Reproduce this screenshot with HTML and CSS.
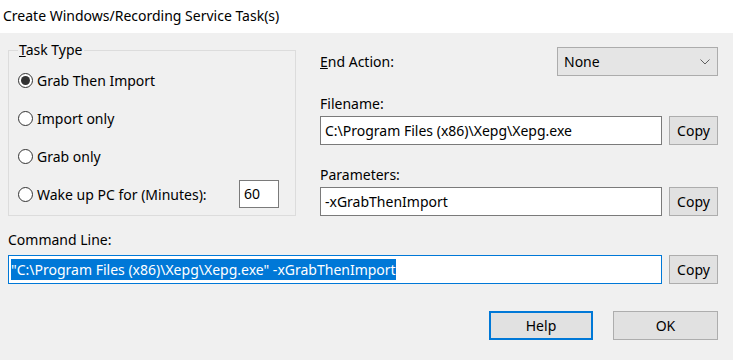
FILE: index.html
```html
<!DOCTYPE html>
<html>
<head>
<meta charset="utf-8">
<link rel="stylesheet" href="styles.css">
</head>
<body>
<div class="titlebar">Create Windows/Recording Service Task(s)</div>
<div class="dialog">
  <div class="top">
    <fieldset class="group">
      <legend class="legend"><u>T</u>ask Type</legend>
      <div class="radio-row"><span class="radio checked"></span><span>Grab Then Import</span></div>
      <div class="radio-row"><span class="radio"></span><span>Import only</span></div>
      <div class="radio-row"><span class="radio"></span><span>Grab only</span></div>
      <div class="radio-row"><span class="radio"></span><span>Wake up PC for (Minutes):</span><div class="field small">60</div></div>
    </fieldset>
    <div class="right">
      <div class="end-row">
        <span class="label"><u>E</u>nd Action:</span>
        <div class="dropdown">
          <span>None</span>
          <svg class="chev" width="10" height="6" viewBox="0 0 10 6"><path d="M0.5 0.5 L5 5 L9.5 0.5" fill="none" stroke="#606060" stroke-width="1"/></svg>
        </div>
      </div>
      <div class="label lbl-file">Filename:</div>
      <div class="field-row">
        <div class="field wide">C:\Program Files (x86)\Xepg\Xepg.exe</div>
        <div class="btn copy">Copy</div>
      </div>
      <div class="label lbl-param">Parameters:</div>
      <div class="field-row">
        <div class="field wide">-xGrabThenImport</div>
        <div class="btn copy">Copy</div>
      </div>
    </div>
  </div>
  <div class="label lbl-cmd">Command Line:</div>
  <div class="field-row">
    <div class="field wide focused"><span class="sel">"C:\Program Files (x86)\Xepg\Xepg.exe" -xGrabThenImport</span></div>
    <div class="btn copy">Copy</div>
  </div>
  <div class="buttons">
    <div class="btn action default">Help</div>
    <div class="btn action">OK</div>
  </div>
</div>
</body>
</html>
```
FILE: styles.css
```css
* { box-sizing: border-box; }
html, body { margin: 0; padding: 0; }
body {
  width: 733px;
  height: 360px;
  overflow: hidden;
  background: #f0f0f0;
  font-family: "Noto Sans", "Open Sans", sans-serif;
  font-size: 14px;
  color: #000;
}
.titlebar {
  height: 33px;
  background: #fff;
  padding: 6px 0 0 3px;
  font-size: 14px;
  line-height: 20px;
  color: #000;
}
.dialog {
  padding: 0 15px 0 8px;
}
.top {
  display: flex;
  align-items: flex-start;
  gap: 24px;
  margin-top: 7px;
}
.group {
  width: 288px;
  height: 176px;
  margin: 0;
  border: 1px solid #dcdcdc;
  padding: 6px 16px 6px 9px;
  display: flex;
  flex-direction: column;
  gap: 10px;
}
.legend {
  padding: 0 1px;
  line-height: 20px;
}
.radio-row {
  display: flex;
  align-items: center;
  height: 28px;
  gap: 4px;
}
.radio {
  width: 15px;
  height: 15px;
  border: 1px solid #333;
  border-radius: 50%;
  background: #fff;
  display: flex;
  align-items: center;
  justify-content: center;
  flex: none;
}
.radio.checked::after {
  content: "";
  width: 9px;
  height: 9px;
  border-radius: 50%;
  background: #333;
}
.field {
  background: #fff;
  border: 1px solid #7a7a7a;
  height: 29px;
  line-height: 27px;
  padding: 0 4px;
  white-space: nowrap;
  overflow: hidden;
}
.field.small {
  width: 40px;
  height: 28px;
  line-height: 26px;
  margin-left: auto;
}
.right {
  width: 398px;
  display: flex;
  flex-direction: column;
}
.label { line-height: 20px; }
.end-row {
  display: flex;
  align-items: center;
  margin-top: 7px;
  height: 29px;
}
.dropdown {
  margin-left: auto;
  width: 161px;
  height: 29px;
  background: #e5e5e5;
  border: 1px solid #acacac;
  display: flex;
  align-items: center;
  justify-content: space-between;
  padding: 0 7px 0 6px;
}
.chev { display: block; }
.lbl-file { margin-top: 18px; }
.lbl-param { margin-top: 20px; }
.field-row {
  display: flex;
  align-items: center;
  gap: 7px;
  margin-top: 2px;
}
.field.wide { flex: 1; }
.btn {
  background: #e1e1e1;
  border: 1px solid #adadad;
  height: 29px;
  display: flex;
  align-items: center;
  justify-content: center;
}
.copy { width: 49px; flex: none; }
.lbl-cmd { margin-top: 14px; }
.lbl-cmd + .field-row { margin-top: 5px; }
.field.focused {
  border-color: #0078d7;
  padding-left: 2px;
}
.sel {
  background: #0078d7;
  color: #fff;
  padding: 1px 0;
}
.buttons {
  display: flex;
  justify-content: flex-end;
  gap: 20px;
  margin-top: 27px;
}
.action { width: 104px; }
.action + .action { width: 105px; }
.default {
  border: 2px solid #0078d7;
}
```
